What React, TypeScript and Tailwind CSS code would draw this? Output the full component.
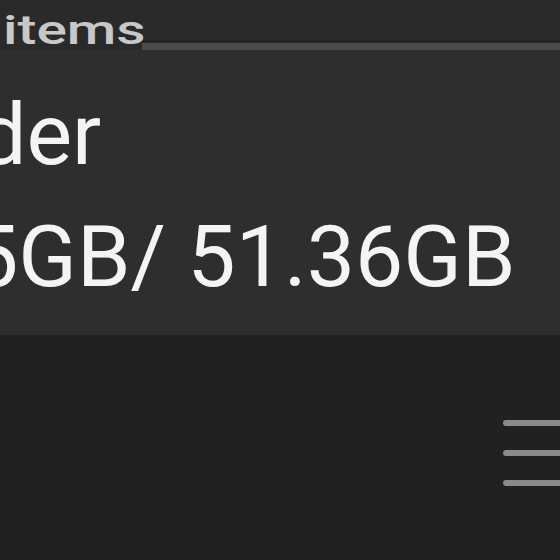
const font = { fontFamily: "Roboto, 'Noto Sans', sans-serif" };

export default function App() {
  return (
    <div
      className="w-[560px] h-[560px] overflow-hidden bg-[#212121] flex flex-col"
      style={font}
    >
      {/* header: item count with divider */}
      <div className="h-[50px] bg-[#2a2a2a] flex items-start">
        <div className="w-[142px] shrink-0">
          <span className="block mt-[11px] ml-[3px] origin-left scale-x-[1.42] text-[40px] leading-[40px] font-medium text-[#c8c8c8] whitespace-nowrap">
            items
          </span>
        </div>
        <div className="self-end flex-1 h-[10px] border-t-[3px] border-[#242424] bg-[#4a4a4a]" />
      </div>

      {/* storage panel */}
      <div className="h-[285px] bg-[#2e2e2e] pt-[24px] text-[86px] leading-[122px] text-[#f4f4f4] whitespace-nowrap">
        <div className="-ml-[22px]">der</div>
        <div className="-ml-[30px]">5GB/ 51.36GB</div>
      </div>

      {/* bottom bar with menu */}
      <div className="flex-1 flex justify-end pt-[85px]">
        <div className="flex flex-col gap-[24px] -mr-[23px]">
          <div className="w-[80px] h-[6px] rounded-full bg-[#8a8a8a]" />
          <div className="w-[80px] h-[6px] rounded-full bg-[#8a8a8a]" />
          <div className="w-[80px] h-[6px] rounded-full bg-[#8a8a8a]" />
        </div>
      </div>
    </div>
  );
}
